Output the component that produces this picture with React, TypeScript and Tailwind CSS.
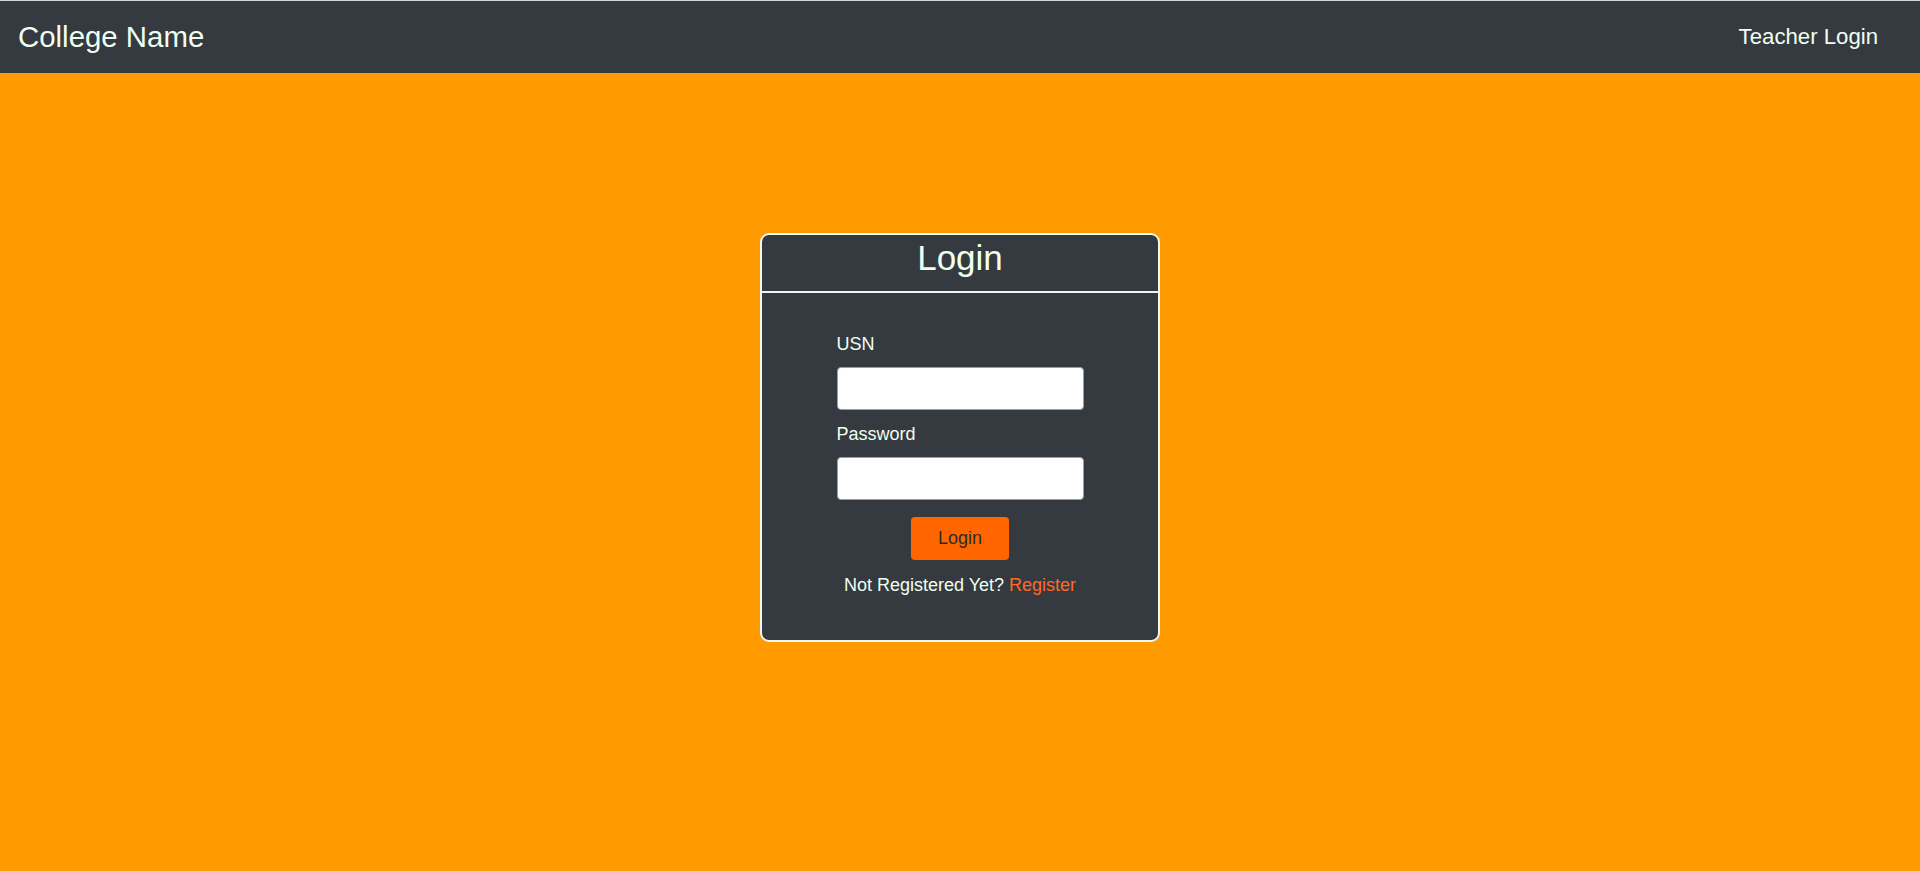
import React from "react";

export default function App() {
  return (
    <div className="min-h-[871px] bg-[#ff9a00] font-['Liberation_Sans',Arial,sans-serif]">
      <nav className="h-[73px] border-t border-[#d4d4d4] bg-[#343a40] flex items-center justify-between pl-[18px] pr-[42px]">
        <span className="text-[29.4px] leading-none text-[#f0fff0]">College Name</span>
        <span className="text-[22.2px] leading-none text-[#f0fff0]">Teacher Login</span>
      </nav>
      <div className="flex justify-center pt-[160px]">
        <div className="w-[400px] border-2 border-[#eef8ee] rounded-[9px] bg-[#343a40] text-[#f0fff0]">
          <div className="h-[58px] pt-[3px] text-center text-[35px] leading-[40px] border-b-2 border-[#eef8ee]">
            Login
          </div>
          <div className="flex flex-col items-center pt-[38px] pb-[41px] text-[18px] leading-[27px]">
            <div className="w-[247px] flex flex-col">
              <label className="mb-[9px]">USN</label>
              <input className="h-[43px] w-full rounded-[4px] border border-[#9a9ea3] bg-white" />
              <label className="mt-[11px] mb-[9px]">Password</label>
              <input type="password" className="h-[43px] w-full rounded-[4px] border border-[#9a9ea3] bg-white" />
            </div>
            <button className="mt-[17px] w-[98px] h-[43px] rounded-[4px] bg-[#ff6600] text-[#2b2b2b] text-[18px]">
              Login
            </button>
            <div className="mt-[12px]">
              Not Registered Yet? <a className="text-[#ff6a1f]">Register</a>
            </div>
          </div>
        </div>
      </div>
    </div>
  );
}
